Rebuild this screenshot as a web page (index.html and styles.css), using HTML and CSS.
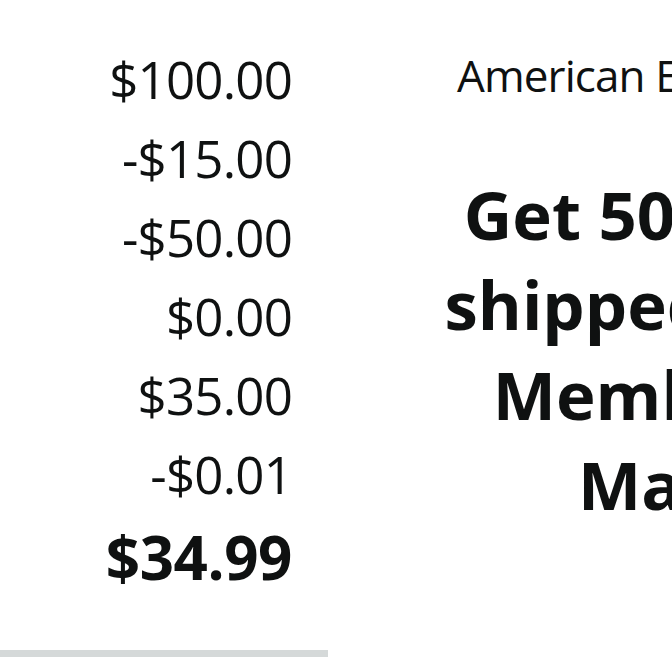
FILE: index.html
```html
<!DOCTYPE html>
<html>
<head>
  <title>Order Summary</title>
  <link rel="stylesheet" href="styles.css">
</head>
<body>
  <div class="page">
    <div class="summary">
      <div class="amounts">
        <div class="amount">$100.00</div>
        <div class="amount">-$15.00</div>
        <div class="amount">-$50.00</div>
        <div class="amount">$0.00</div>
        <div class="amount">$35.00</div>
        <div class="amount">-$0.01</div>
        <div class="amount total">$34.99</div>
      </div>
      <div class="divider"></div>
    </div>

    <div class="promo">
      <div class="card-name">American Express Card</div>
      <h2 class="promo-title">Get 50% back on items<br>shipped by Amazon and<br>Members with Prime<br>Mastercard and</h2>
    </div>
  </div>
</body>
</html>
```

FILE: styles.css
```css
:root {
  --text-primary: #0f1111;
  --divider: #d5d9d9;
  --font: "Open Sans", "Noto Sans", sans-serif;
}

* {
  margin: 0;
  padding: 0;
  box-sizing: border-box;
}

body {
  width: 672px;
  height: 672px;
  overflow: hidden;
  background: #ffffff;
  color: var(--text-primary);
  font-family: var(--font);
}

.page {
  display: flex;
  align-items: flex-start;
}

.summary {
  flex: 0 0 328px;
}

.amounts {
  padding: 40px 36px 0 0;
  text-align: right;
}

.amount {
  font-size: 51px;
  line-height: 79px;
  letter-spacing: -0.8px;
}

.amount.total {
  margin-top: 4px;
  font-size: 60px;
  font-weight: 700;
  letter-spacing: -0.4px;
}

.divider {
  height: 7px;
  margin-top: 53px;
  background: var(--divider);
}

.promo {
  flex: 0 0 1028px;
  padding-top: 45px;
}

.card-name {
  padding-left: 129px;
  font-size: 44px;
  line-height: 60px;
  letter-spacing: -0.9px;
  white-space: nowrap;
}

.promo-title {
  margin-top: 64px;
  font-size: 67px;
  font-weight: 700;
  line-height: 90px;
  text-align: center;
  white-space: nowrap;
}
```
